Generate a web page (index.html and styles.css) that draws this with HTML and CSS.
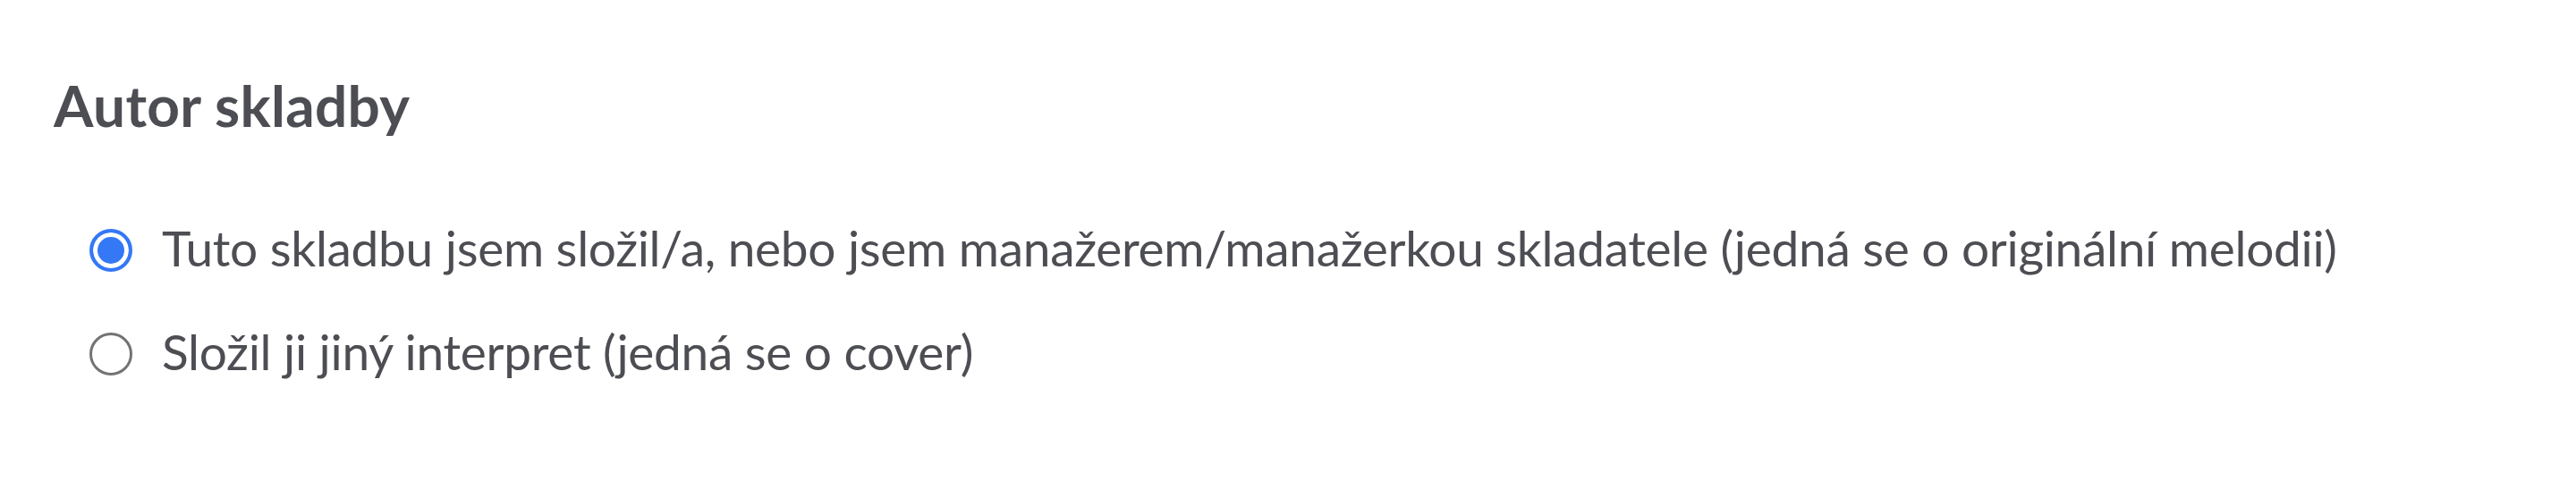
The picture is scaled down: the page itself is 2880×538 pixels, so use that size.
FILE: index.html
```html
<!DOCTYPE html>
<html lang="cs">
<head>
<meta charset="utf-8">
<title>Autor skladby</title>
<link rel="stylesheet" href="styles.css">
</head>
<body>
<section class="field">
  <h2 class="field-title">Autor skladby</h2>
  <div class="options">
    <label class="option">
      <span class="radio radio-checked"></span>
      <span class="option-text">Tuto skladbu jsem složil/a, nebo jsem manažerem/manažerkou skladatele (jedná se o originální melodii)</span>
    </label>
    <label class="option">
      <span class="radio"></span>
      <span class="option-text">Složil ji jiný interpret (jedná se o cover)</span>
    </label>
  </div>
</section>
</body>
</html>
```

FILE: styles.css
```css
html, body {
  margin: 0;
  padding: 0;
  background: #ffffff;
}

body {
  font-family: Lato, "Noto Sans", sans-serif;
  color: #4d4e53;
}

.field {
  padding: 80px 0 0 60px;
}

.field-title {
  margin: 0;
  font-size: 64px;
  font-weight: 700;
  line-height: 76.8px;
  letter-spacing: 0.3px;
  color: #4d4e53;
}

.options {
  display: flex;
  flex-direction: column;
  gap: 49px;
  margin-top: 87px;
  padding-left: 40px;
}

.option {
  display: flex;
  align-items: center;
  gap: 33px;
  font-size: 55px;
  line-height: 67px;
  letter-spacing: -0.3px;
}

.radio {
  flex: none;
  box-sizing: border-box;
  width: 48px;
  height: 48px;
  border-radius: 50%;
  border: 3px solid #737373;
  background: #ffffff;
  margin-top: 6px;
}

.radio-checked {
  border: 4px solid #3478f6;
  background: #3478f6;
  box-shadow: inset 0 0 0 5px #ffffff;
}

.option-text {
  white-space: nowrap;
}
```
